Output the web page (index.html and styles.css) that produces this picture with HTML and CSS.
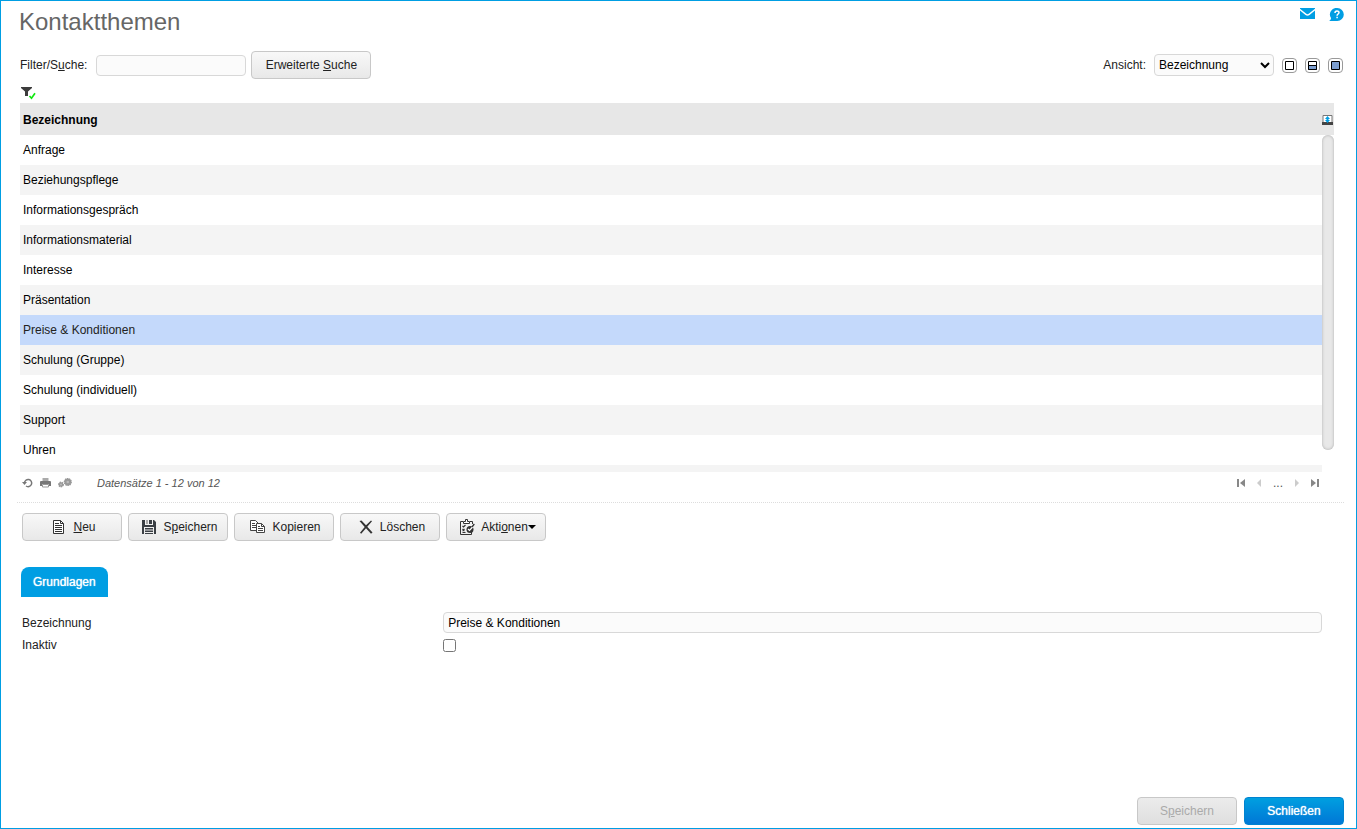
FILE: index.html
```html
<!DOCTYPE html>
<html lang="de">
<head>
<meta charset="utf-8">
<title>Kontaktthemen</title>
<link rel="stylesheet" href="styles.css">
</head>
<body class="window">
<header class="header">
  <h1 class="title">Kontaktthemen</h1>
  <div class="header-links">
    <button class="plain" type="button" aria-label="Nachricht"><svg width="15" height="11" viewBox="0 0 15 11"><path fill="#009ee3" d="M0 0h15v.8L9 5.600Q7.500 6.800 6 5.600L0 .8zM0 2.600L5.500 7Q7.500 8.400 9.500 7L15 2.600V11H0z"/></svg></button>
    <button class="plain" type="button" aria-label="Hilfe"><svg width="15" height="14" viewBox="0 0 15 14"><path fill="#009ee3" d="M8.300 0a6.500 6.500 0 1 1 0 13H0c1.300-.7 2-1.700 2-3A6.500 6.500 0 0 1 8.300 0z"/><path fill="none" stroke="#fff" stroke-width="1.500" d="M6 5c0-2.600 4-2.400 4-.4 0 1.500-1.900 1.400-1.900 3.200M8.100 8.800v1.500"/></svg></button>
  </div>
</header>

<main class="main">
  <form class="filter">
    <label for="search">Filter/S<u>u</u>che:</label>
    <input class="field search" id="search" type="text">
    <button class="button wide" type="button">Erweiterte&nbsp;<u>S</u>uche</button>
    <div class="view">
      <label for="view">Ansicht:</label>
      <select class="field view-select" id="view"><option>Bezeichnung</option></select>
      <button class="layout" type="button" aria-label="Nur Liste"><svg width="9" height="9" viewBox="0 0 9 9"><path fill="#fff" stroke="#000" d="M.5.500h8v8h-8z"/></svg></button>
      <button class="layout" type="button" aria-label="Geteilt"><svg width="9" height="9" viewBox="0 0 9 9"><path fill="#fff" stroke="#000" d="M.5.500h8v8h-8z"/><path fill="#7c9ed0" stroke="#000" d="M.5 4.500h8v4h-8z"/></svg></button>
      <button class="layout" type="button" aria-label="Nur Details"><svg width="9" height="9" viewBox="0 0 9 9"><path fill="#7c9ed0" stroke="#000" d="M.5.500h8v8h-8z"/></svg></button>
    </div>
  </form>

  <button class="plain filter-state" type="button" aria-label="Filter aktiv"><svg width="15" height="13" viewBox="0 0 15 13"><path fill="#3c3c3c" d="M0 0h11v1L7 4.500V9H4V4.500L0 1z"/><path fill="none" stroke="#0fe80f" stroke-width="1.700" d="M8.500 9l2 2.200L14 6.300"/></svg></button>

  <section class="list">
    <table class="grid">
      <thead><tr><th scope="col">Bezeichnung</th><th class="tool" aria-label="Spalten"><svg width="11" height="10" viewBox="0 0 11 10"><path fill="#fff" stroke="#777" d="M1 .5h9v7H1z"/><path fill="#444" d="M0 7h11v3H0z"/><path fill="#009ee3" d="M5.500 1l2.500 3H6.500v1H8L5.500 8 3 5h1.500V4H3z"/></svg></th></tr></thead>
      <tbody>
        <tr><td>Anfrage</td></tr>
        <tr><td>Beziehungspflege</td></tr>
        <tr><td>Informationsgespräch</td></tr>
        <tr><td>Informationsmaterial</td></tr>
        <tr><td>Interesse</td></tr>
        <tr><td>Präsentation</td></tr>
        <tr class="selected"><td>Preise &amp; Konditionen</td></tr>
        <tr><td>Schulung (Gruppe)</td></tr>
        <tr><td>Schulung (individuell)</td></tr>
        <tr><td>Support</td></tr>
        <tr><td>Uhren</td></tr>
        <tr><td></td></tr>
      </tbody>
    </table>
    <div class="thumb"></div>
  </section>

  <div class="status">
    <button class="plain" type="button" aria-label="Aktualisieren"><svg width="11" height="10" viewBox="0 0 11 10"><path fill="none" stroke="#777" stroke-width="1.500" d="M2.500 5A3.600 3.600 0 1 1 4 8"/><path fill="#777" d="M0 4h5L2.500 7z"/></svg></button>
    <button class="plain" type="button" aria-label="Drucken"><svg width="11" height="10" viewBox="0 0 11 10"><path fill="#aaa" d="M2.500 0h6v3h-6z"/><path fill="#777" d="M0 4q0-1 1-1h9q1 0 1 1v4H9V6H2v2H0z"/><path fill="#fff" stroke="#999" d="M2.500 6.500h6v2.500h-6z"/></svg></button>
    <button class="plain" type="button" aria-label="Einstellungen"><svg width="14" height="10" viewBox="0 0 14 10"><g fill="#999" stroke="#999" stroke-width="1.400" stroke-dasharray="1.400 .7"><circle cx="3" cy="6.500" r="2.300"/><circle cx="9.800" cy="4" r="3.400"/></g><circle cx="3" cy="6.500" r="1" fill="#bbb"/><circle cx="9.800" cy="4" r="1.300" fill="#bbb"/></svg></button>
    <em class="count">Datensätze 1 - 12 von 12</em>
    <nav class="pager">
      <button class="plain" type="button" aria-label="Erste Seite"><svg width="8" height="8" viewBox="0 0 8 8"><path fill="#888" d="M0 0h2v8H0zM8 0v8L3 4z"/></svg></button>
      <button class="plain" type="button" aria-label="Vorherige Seite"><svg width="4" height="8" viewBox="0 0 4 8"><path fill="#ccc" d="M4 0v8L0 4z"/></svg></button>
      <span>...</span>
      <button class="plain" type="button" aria-label="Nächste Seite"><svg width="4" height="8" viewBox="0 0 4 8"><path fill="#ccc" d="M0 0v8l4-4z"/></svg></button>
      <button class="plain" type="button" aria-label="Letzte Seite"><svg width="8" height="8" viewBox="0 0 8 8"><path fill="#888" d="M6 0h2v8H6zM0 0v8l5-4z"/></svg></button>
    </nav>
  </div>

  <div class="toolbar">
    <button class="button action" type="button"><svg width="16" height="16" viewBox="0 0 16 16"><path fill="#fff" stroke="#333" d="M2.500 1.500h7l3 3v10h-10z"/><path fill="none" stroke="#333" d="M9.500 1.500v3h3M4 4.500h4M4 6.500h7M4 8.500h7M4 10.500h7M4 12.500h7"/></svg><span><u>N</u>eu</span></button>
    <button class="button action" type="button"><svg width="16" height="16" viewBox="0 0 16 16"><path fill="#3a3f44" d="M1 1h3v5h8V1h1l2 2v12h-2V8H3v7H1z"/><path fill="#3a3f44" d="M8 1h3v4H8zM4 9h8v1.500H4zM4 11.500h8V13H4zM4 14h8v1H4z"/><path fill="#aaa" d="M5 1h2v4H5z"/></svg><span>S<u>p</u>eichern</span></button>
    <button class="button action" type="button"><svg width="16" height="16" viewBox="0 0 16 16"><path fill="#fff" stroke="#444" d="M.5 1.500h5l3 3v7h-8z"/><path fill="none" stroke="#444" d="M2 4.500h3M2 6.500h4M2 8.500h4"/><path fill="#fff" stroke="#444" d="M6.500 4.500h5l3 3v6h-8z"/><path fill="none" stroke="#444" d="M11.500 4.500v3h3M8 7.500h2M8 9.500h5M8 11.500h5"/></svg><span>Kopieren</span></button>
    <button class="button action" type="button"><svg width="16" height="16" viewBox="0 0 16 16"><path fill="#333" d="M1.500 2l2-.6L8 6.300 13 1.500l1 .8L9.300 7.700 14.500 13.500 13 14.800 8 9.300 3.200 14.800 2 13.800 6.700 8z"/></svg><span>Löschen</span></button>
    <button class="button action" type="button"><svg width="16" height="16" viewBox="0 0 16 16"><path fill="none" stroke="#333" d="M4 2.500H1.500v13h11v-3M11 2.500h2.500V5"/><path fill="#fff" stroke="#333" d="M4.500 4.500v-2h2v-2h2v2h2v2z"/><path fill="none" stroke="#333" stroke-width="1.200" d="M3.500 7l1 1 2-2M3.500 10l2 2m0-2l-2 2M3.500 13.500h3"/><circle cx="11" cy="10.500" r="3.500" fill="#333"/><path fill="none" stroke="#fff" stroke-width="1.200" d="M9 10l1.500 1.500L14.500 7"/><path fill="none" stroke="#333" stroke-width="1.300" d="M13 8l2.300-3"/></svg><span>Akti<u>o</u>nen</span><i class="caret"></i></button>
  </div>

  <div class="tabs" role="tablist"><button class="tab" type="button" role="tab" aria-selected="true">Grundlagen</button></div>

  <form class="details">
    <label for="name">Bezeichnung</label>
    <input class="field" id="name" type="text" value="Preise &amp; Konditionen">
    <label for="inactive">Inaktiv</label>
    <input class="check" id="inactive" type="checkbox">
  </form>
</main>

<footer class="footer">
  <button class="button" type="button" disabled>S<u>p</u>eichern</button>
  <button class="button primary" type="button">Schließen</button>
</footer>
</body>
</html>
```
FILE: styles.css
```css
* { box-sizing: border-box; }

.window {
  display: flex;
  flex-direction: column;
  min-height: 100vh;
  margin: 0;
  border: 1px solid #009ee3;
  background: #fff;
  color: #222;
  font: 12px/16px "Liberation Sans", Arial, sans-serif;
}

button, input, select { font: inherit; color: inherit; margin: 0; }
svg { display: block; flex: none; }

.plain { display: block; padding: 0; border: 0; background: none; }

.header {
  display: flex;
  justify-content: space-between;
  padding: 6px 12px 0 18px;
}
.title { margin: 0; color: #666; font-size: 24px; line-height: 30px; font-weight: normal; }
.header-links { display: flex; align-items: flex-start; gap: 14px; padding-top: 1px; }

.main { flex: 1; }

.filter {
  display: flex;
  align-items: center;
  gap: 5px;
  padding: 14px 13px 0 19px;
}
.field {
  height: 21px;
  padding: 0 4px;
  border: 1px solid #d8d8d8;
  border-radius: 4px;
  background: #fbfbfb;
  color: #000;
}
.search { width: 150px; margin-left: 4px; }
.view { display: flex; align-items: center; gap: 8px; margin-left: auto; }
.view-select { width: 120px; height: 22px; padding: 0; }
.layout {
  display: grid;
  place-items: center;
  width: 15px;
  height: 15px;
  padding: 0;
  border: 1px solid #999;
  border-radius: 4px;
  background: #fff;
}

.button {
  display: flex;
  align-items: center;
  justify-content: center;
  min-width: 100px;
  height: 28px;
  padding: 0;
  border: 1px solid #c8c8c8;
  border-radius: 4px;
  background: linear-gradient(#f8f8f8, #e8e8e8);
}
.button:disabled { background: linear-gradient(#ececec, #dfdfdf); color: #aaa; }
.wide { min-width: 120px; }
.action { padding-left: 3px; }
.action span { margin-left: 6px; }
.caret { border: 4px solid transparent; border-top: 4px solid #000; border-bottom: 0; }
.primary {
  border-color: #0083d0;
  background: linear-gradient(#009fe0, #0077d6);
  color: #fff;
  text-shadow: 0 0 1px #fff;
}

.filter-state { margin: 8px 0 3px 20px; }

.list {
  position: relative;
  height: 369px;
  margin: 0 22px 0 19px;
  overflow: hidden;
}
.grid { width: 100%; border-collapse: collapse; table-layout: fixed; color: #000; }
.grid th { height: 32px; padding: 2px 3px 0; background: #e7e7e7; text-align: left; }
.grid .tool { width: 12px; padding: 2px 0 0; }
.grid td { height: 30px; padding: 0 3px; }
.grid tr:nth-child(even) td { background: #f4f4f4; }
.grid .selected td { background: #c4d9fb; color: #222; }
.thumb {
  position: absolute;
  top: 32px;
  right: 0;
  width: 12px;
  height: 315px;
  border-radius: 6px;
  background: #e8e8e8;
  box-shadow: inset 0 0 3px #aaa;
}

.status {
  display: flex;
  align-items: center;
  gap: 7px;
  height: 31px;
  margin: 0 12px 0 16px;
  padding: 0 25px 9px 5px;
  border-bottom: 1px dotted #ddd;
  color: #555;
}
.count { margin-left: 18px; font-size: 11px; }
.pager { display: flex; align-items: center; gap: 12px; margin-left: auto; }

.toolbar { display: flex; gap: 6px; padding: 10px 21px 26px; }

.tabs { display: flex; padding: 0 20px; }
.tab {
  height: 30px;
  padding: 0 12px;
  border: 0;
  border-radius: 8px 8px 0 0;
  background: #009ee3;
  color: #fff;
  text-shadow: 0 0 1px #fff;
}

.details {
  display: grid;
  grid-template-columns: 32.4% 1fr;
  align-items: center;
  row-gap: 4px;
  padding: 15px 34px 0 21px;
}
.check { width: 13px; height: 13px; }

.footer { display: flex; justify-content: flex-end; gap: 7px; padding: 0 12px 3px; }
```
